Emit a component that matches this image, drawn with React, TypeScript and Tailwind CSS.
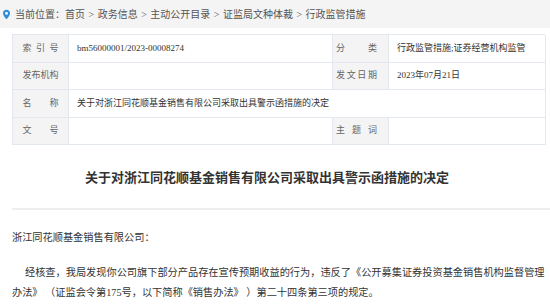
import React from "react";

const font = { fontFamily: '"Liberation Serif", "Noto Sans CJK SC", serif' };

function PinIcon() {
  return (
    <svg width="9" height="11" viewBox="0 0 9 11" className="shrink-0">
      <path
        d="M4.5 0.8C2.5 0.8 1 2.3 1 4.2c0 2.4 3.5 6 3.5 6s3.5-3.6 3.5-6C8 2.3 6.5 0.8 4.5 0.8z"
        fill="#2f8bd6"
      />
      <circle cx="4.5" cy="4.2" r="1.5" fill="#f4f4f4" />
    </svg>
  );
}

function Label({ chars, right }: { chars: string[]; right?: boolean }) {
  return (
    <div
      className={
        "flex h-full items-center bg-[#f4f4f4] border-r border-b border-[#e3e8ee] text-[#666] " +
        (right ? "justify-start pl-[3px]" : "justify-center")
      }
    >
      <div className={"flex justify-between " + (right ? "w-[41px]" : "w-[36px]")}>
        {chars.map((c, i) => (
          <span key={i}>{c}</span>
        ))}
      </div>
    </div>
  );
}

function Value({ children, span }: { children?: React.ReactNode; span?: boolean }) {
  return (
    <div
      className={
        "flex h-full items-center pl-[8px] border-r border-b border-[#e3e8ee] text-[#333] " +
        (span ? "col-span-3" : "")
      }
    >
      {children}
    </div>
  );
}

export default function App() {
  return (
    <div className="w-[550px] h-[304px] overflow-hidden bg-white [text-spacing-trim:space-all]" style={font}>
      <div className="flex h-[28px] items-center gap-[4px] bg-[#f4f4f4] pl-[2px] text-[10px] text-[#555] [word-spacing:1px]">
        <PinIcon />
        <span>当前位置：首页 &gt; 政务信息 &gt; 主动公开目录 &gt; 证监局文种体裁 &gt; 行政监管措施</span>
      </div>

      <div className="px-[12px] pt-[6px]">
        <div className="grid w-[533px] grid-cols-[56px_264px_56px_157px] auto-rows-[27.5px] border-t border-l border-[#e3e8ee] text-[9px]">
          <Label chars={["索", "引", "号"]} />
          <Value>bm56000001/2023-00008274</Value>
          <Label right chars={["分", "类"]} />
          <Value>行政监管措施;证券经营机构监管</Value>

          <Label chars={["发", "布", "机", "构"]} />
          <Value />
          <Label right chars={["发", "文", "日", "期"]} />
          <Value>2023年07月21日</Value>

          <Label chars={["名", "称"]} />
          <Value span>关于对浙江同花顺基金销售有限公司采取出具警示函措施的决定</Value>

          <Label chars={["文", "号"]} />
          <Value />
          <Label right chars={["主", "题", "词"]} />
          <Value />
        </div>
      </div>

      <h1 className="mt-[23px] pl-[4px] pr-[20px] text-center text-[13px] leading-[20px] font-bold text-[#333]">
        关于对浙江同花顺基金销售有限公司采取出具警示函措施的决定
      </h1>
      <div className="ml-[12px] mt-[20px] h-[2px] bg-[#eeeeee]" />

      <div className="px-[12px] pt-[18px] text-[10.2px] leading-[20px] text-[#333]">
        <p>浙江同花顺基金销售有限公司：</p>
        <p className="mt-[15px] whitespace-nowrap">
          <span className="pl-[13px]">
            经核查，我局发现你公司旗下部分产品存在宣传预期收益的行为，违反了《公开募集证券投资基金销售机构监督管理
          </span>
          <br />
          办法》 （证监会令第175号，以下简称《销售办法》 ）第二十四条第三项的规定。
        </p>
      </div>
    </div>
  );
}
